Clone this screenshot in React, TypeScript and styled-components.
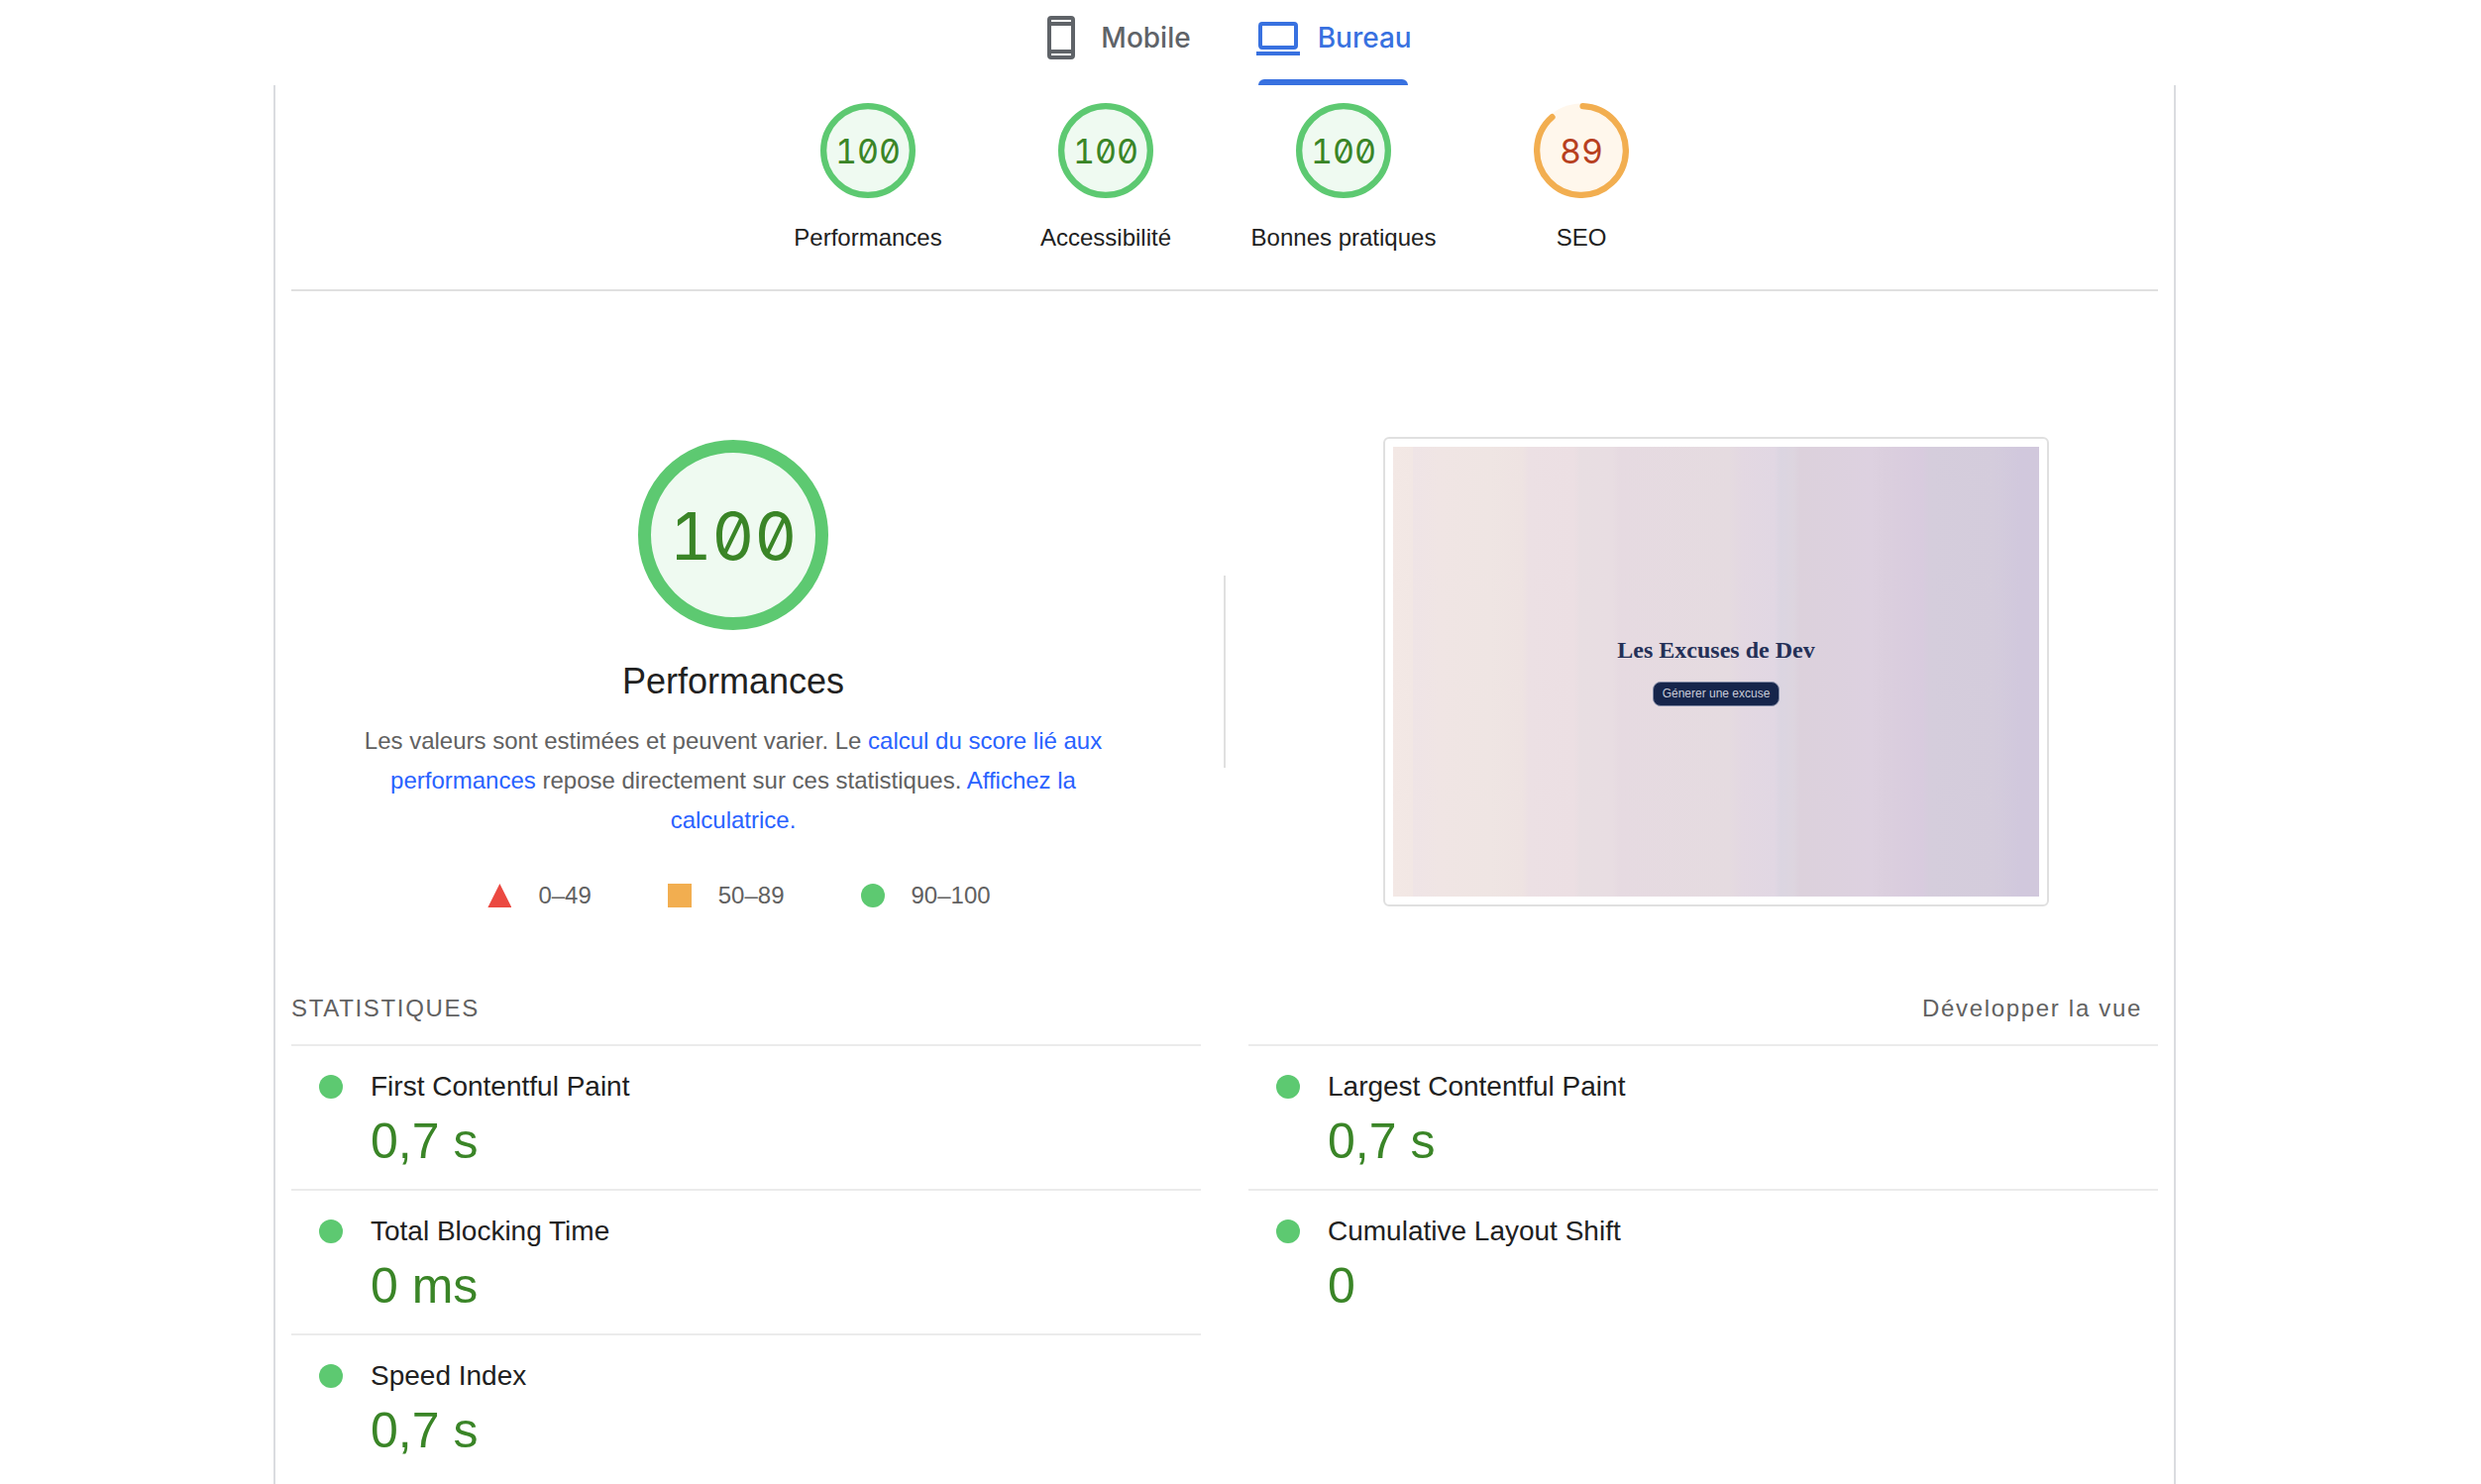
import React from 'react';
import styled, { createGlobalStyle } from 'styled-components';

const GlobalStyle = createGlobalStyle`
  * { box-sizing: border-box; }
  body {
    margin: 0;
    background: #fff;
    color: #212121;
    font-family: "Liberation Sans", Arial, Helvetica, sans-serif;
    font-size: 24px;
    line-height: 32px;
  }
  button { font: inherit; border: 0; background: none; cursor: pointer; }
  h1, h2, h3, p, ul, dl, dd, figure { margin: 0; padding: 0; }
  a { text-decoration: none; }
`;

type Level = 'pass' | 'average';

const palette = {
  pass: { ring: '#5dc971', fill: '#effaf1', text: '#3a8527' },
  average: { ring: '#f2ae50', fill: '#fff7ec', text: '#b7401f' },
};

const Page = styled.div`
  display: flex;
  flex-direction: column;
  align-items: center;
  min-height: 100vh;
  padding-right: 32px;
`;

const Tabs = styled.div`
  display: flex;
  justify-content: center;
`;

const Tab = styled.button<{ $active?: boolean }>`
  position: relative;
  display: flex;
  align-items: center;
  gap: 16px;
  height: 86px;
  padding: 0 32px 10px;
  color: ${(p) => (p.$active ? '#3871e0' : '#5f6368')};
  font-family: Inter, "Liberation Sans", sans-serif;
  font-size: 28px;
  font-weight: 500;

  &::after {
    content: '';
    display: ${(p) => (p.$active ? 'block' : 'none')};
    position: absolute;
    left: 36px;
    right: 36px;
    bottom: 0;
    height: 6px;
    border-radius: 6px 6px 0 0;
    background: currentColor;
  }
`;

const TabIcon = styled.svg`
  width: 48px;
  height: 48px;
  fill: currentColor;
`;

const Report = styled.main`
  flex: 1;
  width: 100%;
  max-width: 1920px;
  padding: 0 16px;
  border: solid #dadce0;
  border-width: 0 2px;
`;

const Scores = styled.nav`
  display: flex;
  justify-content: center;
  padding: 18px 0 36px;
  border-bottom: 2px solid #e0e0e0;
`;

const ScoreLink = styled.a`
  display: flex;
  flex-direction: column;
  align-items: center;
  gap: 24px;
  width: 240px;
  color: #212121;
`;

const GaugeBox = styled.div<{ $large?: boolean }>`
  display: grid;
  width: ${(p) => (p.$large ? 192 : 96)}px;
  height: ${(p) => (p.$large ? 192 : 96)}px;

  > * { grid-area: 1 / 1; }
`;

const GaugeRing = styled.svg`
  width: 100%;
  height: 100%;
`;

const GaugeValue = styled.span<{ $large?: boolean; $level: Level }>`
  place-self: center;
  padding-top: 2px;
  color: ${(p) => palette[p.$level].text};
  font-family: Inter, "DejaVu Sans Mono", monospace;
  font-size: ${(p) => (p.$large ? 66 : 34)}px;
  line-height: 1;
  font-feature-settings: "zero", "tnum";
`;

const Overview = styled.section`
  display: grid;
  grid-template-columns: 1fr 2px 1fr;
  column-gap: 49px;
  align-items: center;
  padding: 146px 0 86px;
`;

const Summary = styled.div`
  display: flex;
  flex-direction: column;
  align-items: center;
  padding-top: 4px;
`;

const SummaryTitle = styled.h1`
  margin-top: 30px;
  font-size: 36px;
  font-weight: 400;
  line-height: 44px;
`;

const Description = styled.p`
  max-width: 784px;
  margin-top: 18px;
  color: #616161;
  line-height: 40px;
  text-align: center;
`;

const TextLink = styled.a`
  color: #2962ff;
`;

const Legend = styled.ul`
  display: flex;
  gap: 77px;
  margin-top: 44px;
  padding-left: 12px;
  list-style: none;
`;

const LegendItem = styled.li`
  display: flex;
  align-items: center;
  gap: 27px;
  color: #616161;
  line-height: 24px;
`;

const Triangle = styled.span`
  width: 24px;
  height: 24px;
  background: #eb4941;
  clip-path: polygon(50% 0, 100% 100%, 0 100%);
`;

const Square = styled.span`
  width: 24px;
  height: 24px;
  background: #f2ae50;
`;

const Dot = styled.span`
  flex: none;
  width: 24px;
  height: 24px;
  border-radius: 50%;
  background: #5dc971;
`;

const Divider = styled.div`
  height: 194px;
  background: #e0e0e0;
`;

const Frame = styled.figure`
  justify-self: center;
  width: 100%;
  max-width: 672px;
  padding: 8px;
  border: 2px solid #e0e0e0;
  border-radius: 6px;
`;

const Preview = styled.div`
  display: flex;
  flex-direction: column;
  align-items: center;
  justify-content: center;
  gap: 16px;
  padding-bottom: 3px;
  aspect-ratio: 652 / 454;
  background: linear-gradient(
    90deg,
    #f3e8e5 0%, #f2e7e4 3%, #efe4e6 3%, #f0e5e4 7%, #efe5e3 15%, #eee3e2 20%,
    #ece0e4 21%, #ecdfe3 28%, #e8dee2 29%, #e8dde2 34%, #e6dae1 35%,
    #e5dbe0 52%, #e3d8e2 54%, #e1d7e3 59%, #dbd5e1 60%, #ddd5df 62%,
    #dcd1dc 63%, #ddd1e0 74%, #dbcfde 76%, #d8cbde 82%, #d5cddc 83%,
    #d4ccdc 93%, #d1c8dd 97%, #d1c8dc 100%
  );
`;

const PreviewTitle = styled.h2`
  color: #243057;
  font-family: "Liberation Serif", serif;
  font-size: 24px;
  font-weight: 700;
  line-height: 32px;
`;

const PreviewButton = styled.button`
  && {
    padding: 0 9px;
    border: 1px solid #8089a4;
    border-radius: 8px;
    background: #16254b;
    color: #c9ccd9;
    font-size: 12px;
    line-height: 23px;
  }
`;

const StatsHeader = styled.div`
  display: flex;
  justify-content: space-between;
  padding-bottom: 20px;
  color: #616161;
  letter-spacing: 0.07em;
`;

const StatsTitle = styled.h2`
  font-size: 24px;
  font-weight: 400;
  text-transform: uppercase;
`;

const ExpandButton = styled.button`
  padding: 0 16px;
  color: inherit;
  && { letter-spacing: inherit; }
`;

const Metrics = styled.div`
  display: grid;
  grid-template-columns: 1fr 1fr;
  column-gap: 48px;
`;

const MetricRow = styled.div`
  display: grid;
  grid-template-columns: 24px 1fr;
  column-gap: 28px;
  row-gap: 8px;
  align-items: center;
  padding: 23px 28px 19px;
  border-top: 2px solid #ebebeb;
`;

const MetricName = styled.h3`
  font-size: 28px;
  font-weight: 400;
  line-height: 36px;
`;

const MetricValue = styled.div`
  grid-column: 2;
  color: #3a8527;
  font-size: 50px;
  line-height: 58px;
`;

function Gauge({ score, level, large }: { score: number; level: Level; large?: boolean }) {
  const stroke = large ? 6.5 : 6.3;
  const radius = 48 - stroke / 2;
  const around = 2 * Math.PI * radius;
  const full = score === 100;
  const arc = full ? around : (score / 100) * around - stroke / 2;
  return (
    <GaugeBox $large={large}>
      <GaugeRing viewBox="0 0 96 96" aria-hidden="true">
        <circle cx="48" cy="48" r="47.5" fill={palette[level].fill} />
        <circle
          cx="48"
          cy="48"
          r={radius}
          fill="none"
          stroke={palette[level].ring}
          strokeWidth={stroke}
          strokeLinecap="round"
          strokeDasharray={full ? undefined : `${arc} ${around}`}
          transform={`rotate(${full ? -90 : -88} 48 48)`}
        />
      </GaugeRing>
      <GaugeValue $large={large} $level={level}>{score}</GaugeValue>
    </GaugeBox>
  );
}

const scores: { label: string; score: number; level: Level }[] = [
  { label: 'Performances', score: 100, level: 'pass' },
  { label: 'Accessibilité', score: 100, level: 'pass' },
  { label: 'Bonnes pratiques', score: 100, level: 'pass' },
  { label: 'SEO', score: 89, level: 'average' },
];

const metrics = [
  { name: 'First Contentful Paint', value: '0,7 s' },
  { name: 'Largest Contentful Paint', value: '0,7 s' },
  { name: 'Total Blocking Time', value: '0 ms' },
  { name: 'Cumulative Layout Shift', value: '0' },
  { name: 'Speed Index', value: '0,7 s' },
];

export default function App() {
  return (
    <>
      <GlobalStyle />
      <Page>
        <Tabs role="tablist">
          <Tab role="tab" aria-selected="false">
            <TabIcon viewBox="0 0 24 24" aria-hidden="true">
              <path
                fillRule="evenodd"
                d="M7 1h10a2 2 0 0 1 2 2v18a2 2 0 0 1-2 2H7a2 2 0 0 1-2-2V3a2 2 0 0 1 2-2zM7 3v1h10V3zM7 6v12h10V6zM7 20v1h10v-1z"
              />
            </TabIcon>
            Mobile
          </Tab>
          <Tab role="tab" aria-selected="true" $active>
            <TabIcon viewBox="0 0 24 24" aria-hidden="true">
              <path
                fillRule="evenodd"
                d="M4 4h16a2 2 0 0 1 2 2v10a2 2 0 0 1-2 2H4a2 2 0 0 1-2-2V6a2 2 0 0 1 2-2zM4 6v10h16V6zM1 19h22v2H1z"
              />
            </TabIcon>
            Bureau
          </Tab>
        </Tabs>

        <Report>
          <Scores>
            {scores.map((s) => (
              <ScoreLink key={s.label} href="#">
                <Gauge score={s.score} level={s.level} />
                <span>{s.label}</span>
              </ScoreLink>
            ))}
          </Scores>

          <Overview>
            <Summary>
              <Gauge score={100} level="pass" large />
              <SummaryTitle>Performances</SummaryTitle>
              <Description>
                Les valeurs sont estimées et peuvent varier. Le{' '}
                <TextLink href="#">calcul du score lié aux performances</TextLink> repose
                directement sur ces statistiques. <TextLink href="#">Affichez la calculatrice.</TextLink>
              </Description>
              <Legend>
                <LegendItem><Triangle />0–49</LegendItem>
                <LegendItem><Square />50–89</LegendItem>
                <LegendItem><Dot />90–100</LegendItem>
              </Legend>
            </Summary>
            <Divider />
            <Frame>
              <Preview>
                <PreviewTitle>Les Excuses de Dev</PreviewTitle>
                <PreviewButton>Génerer une excuse</PreviewButton>
              </Preview>
            </Frame>
          </Overview>

          <StatsHeader>
            <StatsTitle>Statistiques</StatsTitle>
            <ExpandButton>Développer la vue</ExpandButton>
          </StatsHeader>
          <Metrics>
            {metrics.map((m) => (
              <MetricRow key={m.name}>
                <Dot />
                <MetricName>{m.name}</MetricName>
                <MetricValue>{m.value}</MetricValue>
              </MetricRow>
            ))}
          </Metrics>
        </Report>
      </Page>
    </>
  );
}
